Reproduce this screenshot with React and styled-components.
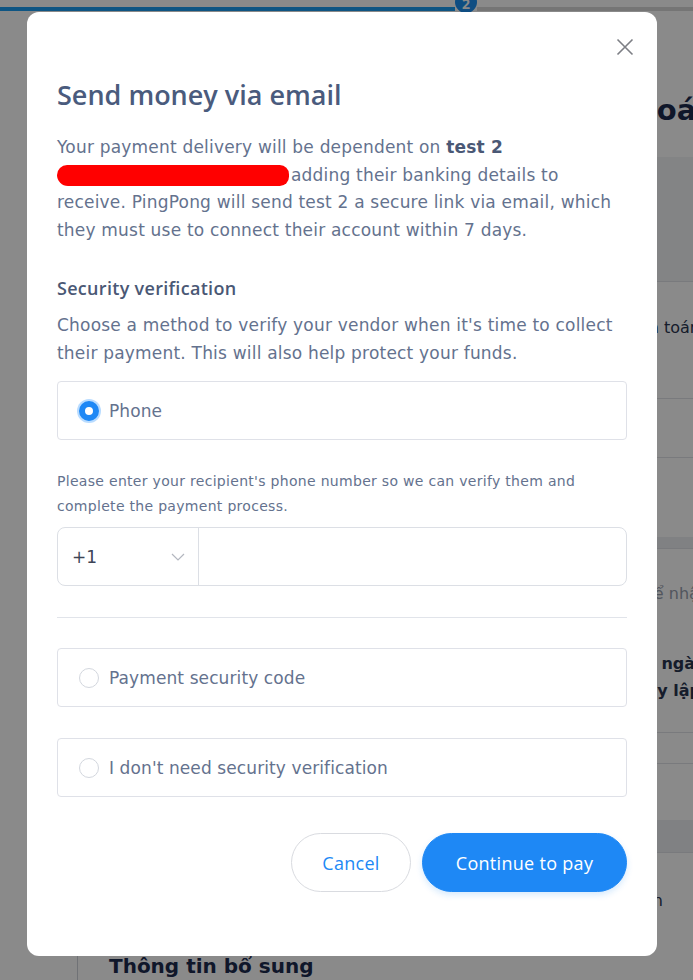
import React, { useState } from "react";
import styled, { createGlobalStyle } from "styled-components";

const GlobalStyle = createGlobalStyle`
  html, body {
    margin: 0;
    padding: 0;
    height: 100%;
    overflow: hidden;
  }
  body {
    font-family: "DejaVu Sans", "Noto Sans", sans-serif;
    background: #ffffff;
  }
`;

// ---------- page behind the modal ----------
const Page = styled.div`
  height: 980px;
  overflow: hidden;
  background: #ffffff;
  color: #1d2b4f;
`;

const Stepper = styled.div`
  display: flex;
  align-items: center;
  height: 10px;
  padding-top: 4px;
`;

const StepBar = styled.div`
  height: 4px;
  flex: ${(p) => p.grow};
  background: ${(p) => (p.done ? "#1a9ef2" : "#d9d9d9")};
`;

const StepDot = styled.div`
  width: 22px;
  height: 22px;
  margin-top: -14px;
  border-radius: 50%;
  background: #1a8ff0;
  color: #fff;
  font: 700 14px "Open Sans", sans-serif;
  display: flex;
  align-items: flex-end;
  justify-content: center;
`;

const Main = styled.div`
  margin-left: 77px;
  width: 700px;
`;

const PageTitle = styled.h1`
  height: 143px;
  margin: 0;
  box-sizing: border-box;
  padding: 78px 60px 0 0;
  text-align: right;
  font: 700 29px/36px "DejaVu Sans", sans-serif;
  white-space: nowrap;
`;

const Panel = styled.div`
  height: 124px;
  background: #f3f4f6;
`;

const Row = styled.div`
  height: ${(p) => p.h}px;
  box-sizing: border-box;
  padding-top: ${(p) => p.pt || 0}px;
  border-top: 1px solid #dfe2e8;
`;

const BgLine = styled.div`
  margin-top: ${(p) => p.mt || 0}px;
  padding-right: ${(p) => p.pr}px;
  text-align: right;
  font: ${(p) => (p.bold ? 700 : 400)} 16px/27px "DejaVu Sans", sans-serif;
  color: ${(p) => (p.muted ? "#98a0ae" : "#2a3550")};
  white-space: nowrap;
`;

const Gap = styled.div`
  height: ${(p) => p.h}px;
  background: ${(p) => (p.grey ? "#edeff2" : "#fff")};
`;

const Card = styled.div`
  margin-top: 34px;
  height: 60px;
  border-left: 1px solid #cfd3da;
  padding-left: 31px;
  font: 700 20px/20px "DejaVu Sans", sans-serif;
`;

const Overlay = styled.div`
  position: fixed;
  inset: 0;
  background: rgba(0, 0, 0, 0.46);
`;

// ---------- modal ----------
const Modal = styled.div`
  position: fixed;
  top: 12px;
  left: 27px;
  width: 630px;
  height: 944px;
  box-sizing: border-box;
  padding: 67px 30px 0 30px;
  background: #fff;
  border-radius: 12px;
  display: flex;
  flex-direction: column;
`;

const Close = styled.button`
  position: absolute;
  top: 24px;
  right: 21px;
  width: 22px;
  height: 22px;
  padding: 0;
  border: 0;
  background: none;
  cursor: pointer;
`;

const Title = styled.h2`
  margin: 0;
  font: 600 27px/32px "Open Sans", sans-serif;
  color: #4a5b7d;
`;

const Text = styled.p`
  margin: ${(p) => p.mt || 0}px 0 0 0;
  font-size: ${(p) => p.size || 17}px;
  line-height: ${(p) => p.lh || 27.5}px;
  letter-spacing: ${(p) => p.ls || 0.2}px;
  color: #64728e;
`;

const Strong = styled.b`
  font-weight: 700;
  color: #4a5875;
`;

const Redacted = styled.span`
  display: inline-block;
  width: 232px;
  height: 21px;
  margin-right: 2px;
  vertical-align: -5px;
  background: #ff0000;
  border-radius: 11px 10px 10px 12px;
`;

const Heading = styled.h3`
  margin: 32px 0 0 0;
  font: 600 18px/24px "Open Sans", sans-serif;
  letter-spacing: 0.3px;
  color: #4a5875;
`;

const Option = styled.label`
  display: flex;
  align-items: center;
  gap: 10px;
  height: 59px;
  box-sizing: border-box;
  margin-top: ${(p) => p.mt}px;
  padding-left: 21px;
  border: 1px solid #dfe1e8;
  border-radius: 4px;
  font-size: 17px;
  letter-spacing: 0.1px;
  color: #64728e;
  cursor: pointer;
`;

const Radio = styled.span`
  width: 20px;
  height: 20px;
  box-sizing: border-box;
  border-radius: 50%;
  flex-shrink: 0;
  border: ${(p) => (p.checked ? "6px solid #1e88f5" : "1px solid #d3d7de")};
  background: #fff;
  box-shadow: ${(p) => (p.checked ? "0 0 0 2px #b9dcff" : "none")};
`;

const PhoneField = styled.div`
  display: flex;
  height: 59px;
  margin-top: 8px;
  box-sizing: border-box;
  border: 1px solid #dcdfe5;
  border-radius: 8px;
`;

const Country = styled.div`
  width: 141px;
  box-sizing: border-box;
  display: flex;
  align-items: center;
  justify-content: space-between;
  padding: 0 13px 0 14px;
  border-right: 1px solid #dcdfe5;
  font-size: 17px;
  color: #3d4556;
`;

const PhoneInput = styled.input`
  flex: 1;
  min-width: 0;
  border: 0;
  outline: none;
  background: transparent;
  padding: 0 14px;
  font: 17px "DejaVu Sans", sans-serif;
`;

const Divider = styled.hr`
  margin: 31px 0 0 0;
  border: 0;
  border-top: 1px solid #e1e4ea;
`;

const Actions = styled.div`
  display: flex;
  justify-content: flex-end;
  gap: 11px;
  margin-top: 36px;
`;

const Button = styled.button`
  height: 59px;
  width: ${(p) => p.w}px;
  border-radius: 30px;
  font: 400 18px "Open Sans", sans-serif;
  letter-spacing: 0.3px;
  cursor: pointer;
  border: 1px solid ${(p) => (p.primary ? "#1e88f5" : "#d9dbe0")};
  background: ${(p) => (p.primary ? "#1e88f5" : "#fff")};
  color: ${(p) => (p.primary ? "#fff" : "#1e88f5")};
  box-shadow: ${(p) => (p.primary ? "0 3px 6px rgba(30,136,245,0.18)" : "none")};
`;

const methods = [
  { id: "phone", label: "Phone" },
  { id: "code", label: "Payment security code" },
  { id: "none", label: "I don't need security verification" },
];

export default function App() {
  const [method, setMethod] = useState("phone");

  return (
    <>
      <GlobalStyle />
      <Page>
        <Stepper>
          <StepBar done grow={455} />
          <StepDot>2</StepDot>
          <StepBar grow={216} />
        </Stepper>
        <Main>
          <PageTitle>Xác nhận thanh toán</PageTitle>
          <Panel />
          <Row h={117} pt={32}>
            <BgLine pr={77}>Phương thức thanh toán</BgLine>
          </Row>
          <Row h={59} />
          <Row h={41} />
          <Gap h={39} />
          <Gap h={11} grey />
          <Row h={184} pt={31}>
            <BgLine pr={68} muted>Người nhận có thể nhận</BgLine>
            <BgLine mt={43} pr={72} bold>Dự kiến trong ngày</BgLine>
            <BgLine pr={42} bold>Gửi ngay lập tức</BgLine>
          </Row>
          <Row h={31} />
          <Row h={57} />
          <Gap h={32} grey />
          <Row h={70} pt={34}>
            <BgLine pr={114}>Lời nhắn</BgLine>
          </Row>
          <Card>Thông tin bổ sung</Card>
        </Main>
      </Page>
      <Overlay />

      <Modal role="dialog" aria-labelledby="send-title">
        <Close aria-label="Close">
          <svg width="22" height="22" viewBox="0 0 22 22" fill="none" stroke="#7d7f85" strokeWidth="1.6">
            <path d="M3.5 3.5l15 15M18.5 3.5l-15 15" />
          </svg>
        </Close>

        <Title id="send-title">Send money via email</Title>

        <Text mt={23}>
          Your payment delivery will be dependent on <Strong>test 2</Strong>{" "}
          <Redacted />adding their banking details to receive. PingPong will send test 2 a
          secure link via email, which they must use to connect their account within 7 days.
        </Text>

        <Heading>Security verification</Heading>
        <Text mt={11} lh={28}>
          Choose a method to verify your vendor when it's time to collect their payment. This
          will also help protect your funds.
        </Text>

        <Option mt={14} onClick={() => setMethod("phone")}>
          <Radio checked={method === "phone"} />
          {methods[0].label}
        </Option>

        <Text mt={29} size={14} lh={25} ls={0.3}>
          Please enter your recipient's phone number so we can verify them and complete the
          payment process.
        </Text>

        <PhoneField>
          <Country>
            +1
            <svg width="14" height="8" viewBox="0 0 14 8" fill="none" stroke="#b3b7bf" strokeWidth="1.2">
              <path d="M1 1l6 6 6-6" />
            </svg>
          </Country>
          <PhoneInput aria-label="Phone number" />
        </PhoneField>

        <Divider />

        {methods.slice(1).map((m, i) => (
          <Option key={m.id} mt={i === 0 ? 30 : 31} onClick={() => setMethod(m.id)}>
            <Radio checked={method === m.id} />
            {m.label}
          </Option>
        ))}

        <Actions>
          <Button w={120}>Cancel</Button>
          <Button w={205} primary>Continue to pay</Button>
        </Actions>
      </Modal>
    </>
  );
}
